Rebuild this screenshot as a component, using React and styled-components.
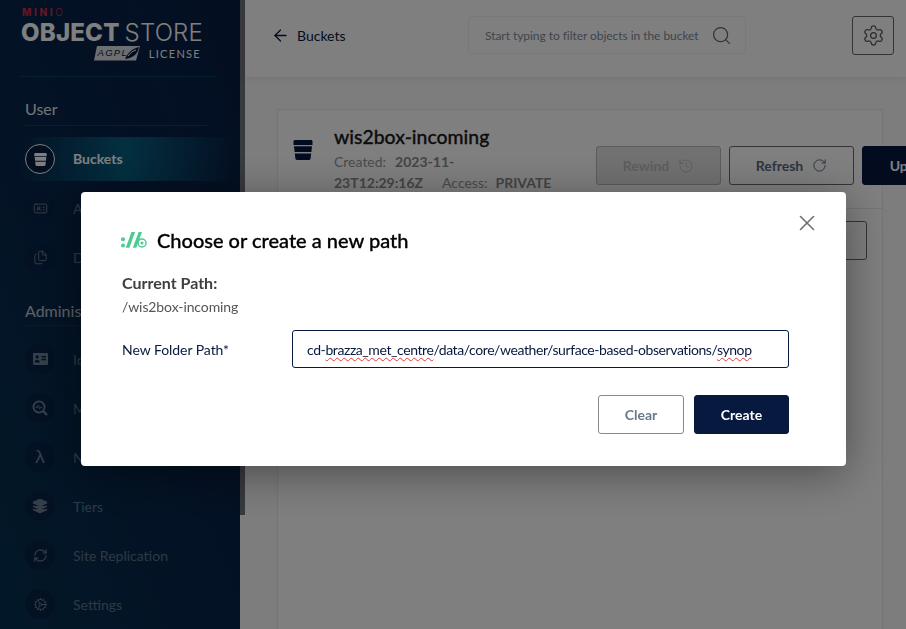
import React from "react";
import styled, { createGlobalStyle } from "styled-components";
import {
  ArrowLeft,
  Search,
  Settings,
  RotateCw,
  History,
  X,
  Upload,
  IdCard,
  Files,
  Layers,
  RefreshCw,
  Cog,
} from "lucide-react";

const GlobalStyle = createGlobalStyle`
  html, body {
    margin: 0;
    height: 100%;
    overflow: hidden;
    background: #fbfafa;
    font-family: "Lato", "Liberation Sans", sans-serif;
  }
`;

const Layout = styled.div`
  display: flex;
  height: 100vh;
  overflow: hidden;
`;

const Sidebar = styled.nav`
  width: 240px;
  flex-shrink: 0;
  background: linear-gradient(70deg, #05304f 0%, #07244a 50%, #081c42 100%);
  color: #fff;
`;

const ScrollThumb = styled.div`
  width: 5px;
  height: 515px;
  flex-shrink: 0;
  background: #6f747f;
`;

const LogoBlock = styled.div`
  height: 77px;
  box-sizing: border-box;
  margin: 0 24px 0 20px;
  padding: 7px 0 0 1px;
  border-bottom: 1px solid #0d3f66;
  line-height: 1;
`;

const Minio = styled.div`
  margin-left: 1px;
  font-family: "Inter", sans-serif;
  font-size: 10px;
  line-height: 11px;
  letter-spacing: 2.6px;
  font-weight: 800;
  color: #c72c48;
  & span {
    font-weight: 300;
  }
`;

const LogoName = styled.div`
  margin-top: 3px;
  font-family: "Inter", sans-serif;
  font-size: 24px;
  line-height: 24px;
  font-weight: 800;
  letter-spacing: 0.2px;
  white-space: nowrap;
  color: #fff;
  & span {
    font-weight: 300;
    margin-left: 5px;
  }
`;

const LicenseRow = styled.div`
  display: flex;
  align-items: center;
  justify-content: flex-end;
  gap: 9px;
  margin-top: 1px;
  width: 180px;
  font-size: 11px;
  letter-spacing: 1.3px;
`;

const SectionLabel = styled.div`
  display: flex;
  align-items: flex-end;
  height: ${(props) => props.$height}px;
  box-sizing: border-box;
  margin-left: 25px;
  width: 182px;
  padding-bottom: ${(props) => props.$pad}px;
  border-bottom: 1px solid #0d3f66;
  font-size: 16px;
  white-space: nowrap;
  color: #e4e8ec;
  opacity: ${(props) => props.$dim || 1};
`;

const NavList = styled.div`
  display: flex;
  flex-direction: column;
  gap: 5px;
  margin-top: 11px;
`;

const NavRow = styled.div`
  display: flex;
  align-items: center;
  gap: 18px;
  height: 44px;
  padding-left: 25px;
  background: ${(props) =>
    props.$active
      ? "linear-gradient(90deg, transparent 8%, #076080 52%, transparent 98%)"
      : "none"};
`;

const NavCircle = styled.span`
  display: flex;
  align-items: center;
  justify-content: center;
  box-sizing: border-box;
  width: 30px;
  height: 30px;
  border-radius: 50%;
  flex-shrink: 0;
  border: ${(props) => (props.$active ? "1px solid #fff" : "none")};
  background: ${(props) => (props.$active ? "#071c3e" : "#062347")};
  color: ${(props) => (props.$active ? "#fff" : "#6d7f92")};
  font-size: 19px;
  font-family: "Liberation Sans", sans-serif;
`;

const NavLabel = styled.span`
  font-size: 14px;
  line-height: 16px;
  margin-top: ${(props) => (props.$active ? 0 : 2)}px;
  font-weight: ${(props) => (props.$active ? 700 : 400)};
  color: ${(props) => (props.$active ? "#fff" : "#5e7389")};
  white-space: nowrap;
`;

const Main = styled.main`
  flex: 1;
  min-width: 0;
  background: #fafafa;
`;

const Header = styled.header`
  display: flex;
  align-items: center;
  height: 77px;
  box-sizing: border-box;
  background: #fff;
  box-shadow: 0 2px 8px rgba(0, 0, 0, 0.07);
  padding: 0 12px 7px 26px;
`;

const BackLink = styled.div`
  display: flex;
  align-items: center;
  gap: 7px;
  width: 197px;
  font-size: 14px;
  color: #07193e;
`;

const SearchBox = styled.div`
  display: flex;
  align-items: center;
  justify-content: space-between;
  box-sizing: border-box;
  width: 278px;
  height: 38px;
  padding: 0 13px 0 16px;
  border: 1px solid #f0f0f0;
  border-radius: 3px;
  font-size: 12px;
  letter-spacing: -0.05px;
  white-space: nowrap;
  color: #7f8a98;
`;

const GearButton = styled.button`
  display: flex;
  align-items: center;
  justify-content: center;
  width: 42px;
  height: 39px;
  margin-left: auto;
  padding: 0;
  background: #fff;
  border: 1px solid #696969;
  border-radius: 3px;
  color: #555;
`;

const Content = styled.div`
  padding: 32px 0 0 32px;
`;

const Card = styled.section`
  width: 606px;
  height: 600px;
  box-sizing: border-box;
  border: 1px solid #ebebeb;
  background: #fff;
`;

const CardHeader = styled.div`
  display: flex;
  height: 99px;
  border-bottom: 1px solid #e8e8e8;
  box-sizing: border-box;
  padding-left: 15px;
`;

const BucketMark = styled.div`
  width: 41px;
  flex-shrink: 0;
  padding-top: 30px;
  color: #07193e;
`;

const BucketInfo = styled.div`
  width: 262px;
  flex-shrink: 0;
  padding-top: 15px;
`;

const BucketName = styled.h1`
  margin: 0 0 2px;
  font-size: 19.4px;
  line-height: 24px;
  font-weight: 500;
  -webkit-text-stroke: 0.3px #1a1a1a;
  color: #1a1a1a;
`;

const BucketMeta = styled.div`
  font-size: 14px;
  line-height: 21px;
  color: #969696;
  white-space: nowrap;
  & b {
    color: #8a8a8a;
  }
  & i {
    font-style: normal;
    margin: 0 8px 0 19px;
  }
`;

const CreatedDate = styled.b`
  margin-left: 9px;
`;

const Toolbar = styled.div`
  display: flex;
  gap: 8px;
  padding-top: 36px;
`;

const ActionButton = styled.button`
  display: flex;
  align-items: center;
  justify-content: center;
  gap: 9px;
  box-sizing: border-box;
  width: ${(props) => props.$width || 125}px;
  height: 39px;
  flex-shrink: 0;
  border-radius: 3px;
  font-family: inherit;
  font-size: 14px;
  font-weight: 700;
  border: 1px solid
    ${(props) =>
      props.$variant === "primary"
        ? "#07193e"
        : props.$variant === "disabled"
          ? "#b8b8b8"
          : "#696969"};
  background: ${(props) =>
    props.$variant === "primary"
      ? "#07193e"
      : props.$variant === "disabled"
        ? "#e2e2e2"
        : "#fff"};
  color: ${(props) =>
    props.$variant === "primary"
      ? "#fff"
      : props.$variant === "disabled"
        ? "#bdbdbd"
        : "#5b6b7c"};
`;

const SubBar = styled.div`
  display: flex;
  justify-content: flex-end;
  padding: 12px 15px 0 0;
`;

const Backdrop = styled.div`
  position: fixed;
  inset: 0;
  padding: 192px 0 0 81px;
  background: rgba(0, 0, 0, 0.5);
`;

const Modal = styled.div`
  position: relative;
  box-sizing: border-box;
  width: 765px;
  height: 274px;
  padding: 39px 57px 0 40px;
  background: #fff;
  border-radius: 4px;
  box-shadow: 0 8px 45px rgba(0, 0, 0, 0.4);
`;

const CloseButton = styled.button`
  position: absolute;
  top: 18px;
  right: 26px;
  display: flex;
  padding: 0;
  border: 0;
  background: none;
  color: #6f6f6f;
`;

const ModalTitle = styled.h2`
  display: flex;
  align-items: center;
  gap: 10px;
  margin: -1px 0 24px;
  font-size: 20px;
  line-height: 20px;
  font-weight: 500;
  -webkit-text-stroke: 0.3px #000;
  color: #000;
`;

const PathLabel = styled.div`
  margin-left: 1px;
  font-size: 16px;
  line-height: 18px;
  font-weight: 700;
  color: #3e3e3e;
`;

const PathValue = styled.div`
  margin: 6px 0 15px 1px;
  font-size: 14px;
  line-height: 17px;
  letter-spacing: -0.1px;
  color: #555;
`;

const FieldRow = styled.div`
  display: flex;
  align-items: center;
`;

const FieldLabel = styled.label`
  width: 170px;
  margin-left: 1px;
  font-size: 14px;
  letter-spacing: -0.05px;
  color: #07193e;
`;

const FieldInput = styled.div`
  box-sizing: border-box;
  width: 497px;
  height: 38px;
  padding: 0 14px;
  border: 1px solid #07193e;
  border-radius: 3px;
  font-size: 14px;
  letter-spacing: -0.41px;
  line-height: 37px;
  white-space: nowrap;
  color: #07193e;
`;

const Misspelled = styled.span`
  text-decoration: underline wavy #e53935 1px;
  text-underline-offset: 2px;
`;

const ModalActions = styled.div`
  display: flex;
  justify-content: flex-end;
  gap: 10px;
  margin-top: 27px;
`;

const ModalButton = styled.button`
  box-sizing: border-box;
  width: ${(props) => props.$width}px;
  height: 39px;
  border-radius: 3px;
  font-family: inherit;
  font-size: 14px;
  font-weight: 700;
  border: 1px solid ${(props) => (props.$primary ? "#07193e" : "#8a8a8a")};
  background: ${(props) => (props.$primary ? "#07193e" : "#fff")};
  color: ${(props) => (props.$primary ? "#fff" : "#6a7a8c")};
`;

const BucketIcon = ({ size = 20 }) => (
  <svg width={size} height={size} viewBox="0 0 20 20" fill="currentColor">
    <path d="M0.5 1.5C0.5 .7 1.2 0 2 0h16c.8 0 1.5.7 1.5 1.5V5H.5V1.5Z" />
    <path d="M1 6.2h18l-.6 5.8H1.6Z" />
    <path d="M1.8 13.4h16.4l-.6 5.2c-.1.8-.7 1.4-1.5 1.4H3.9c-.8 0-1.4-.6-1.5-1.4Z" />
  </svg>
);

const AgplBadge = () => (
  <svg width="46" height="15" viewBox="0 0 46 15">
    <path d="M3 0h43l-4 14.5H0Z" fill="#fff" opacity="0.85" />
    <text
      x="3.5"
      y="10"
      fontFamily="Liberation Sans, sans-serif"
      fontSize="9.5"
      fontStyle="italic"
      fill="#07193e"
    >
      AGPL
    </text>
    <path d="M31 13c3-7 7-10 14-12-1 6-5 11-14 12Z" fill="#07193e" />
    <path d="M34 10c2-3 5-5 8-6" stroke="#fff" strokeWidth="1" fill="none" />
  </svg>
);

const AddPathIcon = () => (
  <svg width="26" height="16" viewBox="0 0 26 16" fill="#4ccb92">
    <circle cx="2" cy="7.2" r="2" />
    <circle cx="2" cy="13.4" r="2" />
    <path d="M10.5 0h3.6L8.4 15.8H4.8ZM17.6 0h3.4l-5.7 15.8h-3.5Z" />
    <circle cx="21" cy="11" r="4" fill="none" stroke="#4ccb92" strokeWidth="1.5" />
    <circle cx="21" cy="11" r="1.5" />
  </svg>
);

const IdentityIcon = () => (
  <svg width="15" height="12" viewBox="0 0 15 12" fill="currentColor">
    <path
      fillRule="evenodd"
      d="M1 0h13a1 1 0 0 1 1 1v10a1 1 0 0 1-1 1H1a1 1 0 0 1-1-1V1a1 1 0 0 1 1-1Zm7.5 3v1.4H13V3Zm0 2.8v1.4H13V5.8ZM4.2 2.2a1.7 1.7 0 1 0 0 3.4 1.7 1.7 0 0 0 0-3.4ZM1.6 9.6h5.2c0-1.7-1.1-2.9-2.6-2.9S1.6 7.9 1.6 9.6Z"
    />
  </svg>
);

const MonitoringIcon = () => (
  <svg width="16" height="16" viewBox="0 0 16 16" fill="none" stroke="currentColor">
    <circle cx="7" cy="7" r="5.6" strokeWidth="1.8" />
    <path d="M11 11l4 4" strokeWidth="2.4" />
    <path d="M3.6 7.4h1.6l1-2 1.5 3.4 1-1.4h1.4" strokeWidth="1" />
  </svg>
);

const userItems = [
  { label: "Access Keys", icon: <IdCard size={15} strokeWidth={1.5} /> },
  { label: "Documentation", icon: <Files size={15} strokeWidth={1.5} /> },
];

const adminItems = [
  { label: "Identity", icon: <IdentityIcon /> },
  { label: "Monitoring", icon: <MonitoringIcon /> },
  { label: "Notifications", icon: "λ" },
  { label: "Tiers", icon: <Layers size={16} strokeWidth={1.6} fill="currentColor" /> },
  { label: "Site Replication", icon: <RefreshCw size={15} strokeWidth={1.7} /> },
  { label: "Settings", icon: <Cog size={15} strokeWidth={1.4} /> },
];

const NavItem = ({ label, icon, active }) => (
  <NavRow $active={active}>
    <NavCircle $active={active}>{icon}</NavCircle>
    <NavLabel $active={active}>{label}</NavLabel>
  </NavRow>
);

const App = () => (
  <>
    <GlobalStyle />
    <Layout>
      <Sidebar>
        <LogoBlock>
          <Minio>
            MINI<span>O</span>
          </Minio>
          <LogoName>
            OBJECT<span>STORE</span>
          </LogoName>
          <LicenseRow>
            <AgplBadge />
            LICENSE
          </LicenseRow>
        </LogoBlock>
        <SectionLabel $height={49} $pad={7}>
          User
        </SectionLabel>
        <NavList>
          <NavItem active label="Buckets" icon={<BucketIcon size={13} />} />
          {userItems.map((item) => (
            <NavItem key={item.label} {...item} />
          ))}
        </NavList>
        <SectionLabel $height={47} $pad={5} $dim={0.8}>
          Administrator
        </SectionLabel>
        <NavList>
          {adminItems.map((item) => (
            <NavItem key={item.label} {...item} />
          ))}
        </NavList>
      </Sidebar>
      <ScrollThumb />
      <Main>
        <Header>
          <BackLink>
            <ArrowLeft size={19} color="#07193e" strokeWidth={1.6} />
            Buckets
          </BackLink>
          <SearchBox>
            Start typing to filter objects in the bucket
            <Search size={21} strokeWidth={1.4} color="#5f6770" />
          </SearchBox>
          <GearButton>
            <Settings size={23} strokeWidth={1.3} />
          </GearButton>
        </Header>
        <Content>
          <Card>
            <CardHeader>
              <BucketMark>
                <BucketIcon />
              </BucketMark>
              <BucketInfo>
                <BucketName>wis2box-incoming</BucketName>
                <BucketMeta>
                  Created:<CreatedDate>2023-11-</CreatedDate>
                  <br />
                  <b>23T12:29:16Z</b>
                  <i>Access:</i>
                  <b>PRIVATE</b>
                </BucketMeta>
              </BucketInfo>
              <Toolbar>
                <ActionButton $variant="disabled">
                  Rewind <History size={16} strokeWidth={1.5} />
                </ActionButton>
                <ActionButton>
                  Refresh <RotateCw size={15} strokeWidth={1.6} />
                </ActionButton>
                <ActionButton $variant="primary">
                  Upload <Upload size={16} strokeWidth={1.6} />
                </ActionButton>
              </Toolbar>
            </CardHeader>
            <SubBar>
              <ActionButton $width={170}>Create new path</ActionButton>
            </SubBar>
          </Card>
        </Content>
      </Main>
    </Layout>
    <Backdrop>
      <Modal>
        <CloseButton>
          <X size={26} strokeWidth={1.5} />
        </CloseButton>
        <ModalTitle>
          <AddPathIcon />
          Choose or create a new path
        </ModalTitle>
        <PathLabel>Current Path:</PathLabel>
        <PathValue>/wis2box-incoming</PathValue>
        <FieldRow>
          <FieldLabel>New Folder Path*</FieldLabel>
          <FieldInput>
            cd-<Misspelled>brazza_met_centre</Misspelled>
            /data/core/weather/surface-based-observations/
            <Misspelled>synop</Misspelled>
          </FieldInput>
        </FieldRow>
        <ModalActions>
          <ModalButton $width={86}>Clear</ModalButton>
          <ModalButton $width={95} $primary>
            Create
          </ModalButton>
        </ModalActions>
      </Modal>
    </Backdrop>
  </>
);

export default App;
